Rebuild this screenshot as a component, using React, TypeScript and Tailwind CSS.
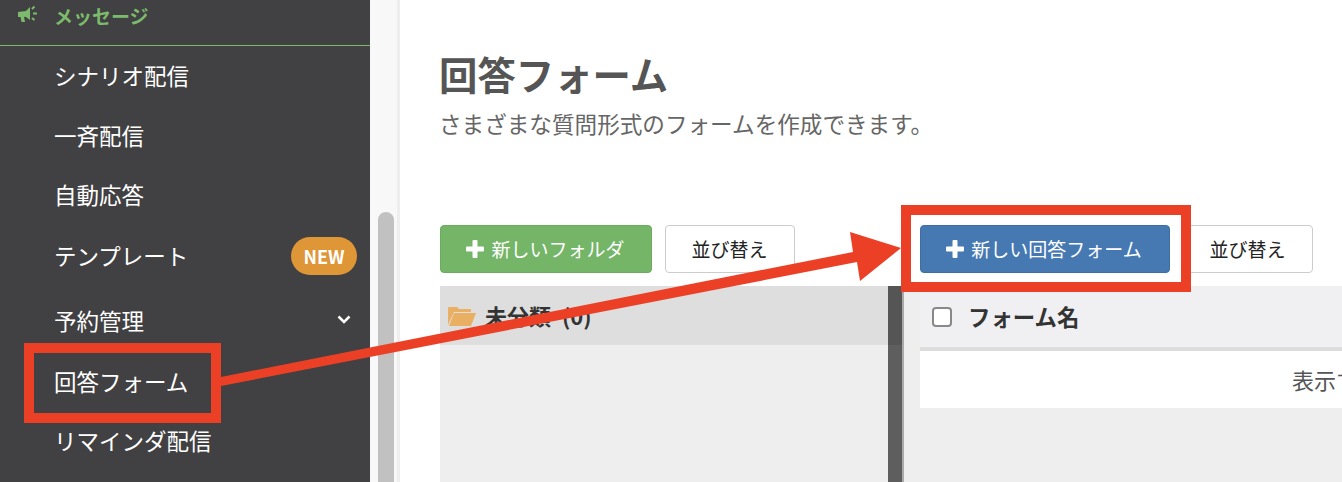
import React from 'react';

const sideItems = [
  { label: 'シナリオ配信', h: 'h-[59px]' },
  { label: '一斉配信', h: 'h-[61px]' },
  { label: '自動応答', h: 'h-[57px]' },
];

const Plus = () => (
  <svg width="18" height="18" viewBox="0 0 18 18" className="shrink-0">
    <path d="M6.5 1q0-1 1-1h3q1 0 1 1v5.5H17q1 0 1 1v3q0 1-1 1h-5.5V17q0 1-1 1h-3q-1 0-1-1v-5.5H1q-1 0-1-1v-3q0-1 1-1h5.5z" fill="#fff" />
  </svg>
);

const SortButton = () => (
  <button className="w-[130px] h-12 pr-[1px] bg-white border border-[#ccc] rounded text-[19px] text-[#222]">
    並び替え
  </button>
);

// 注釈の赤枠と矢印
const Annotations = () => (
  <>
    <div className="absolute left-[24px] top-[343px] w-[197px] h-[80px] border-[10px] border-[#ec4026]" />
    <div className="absolute left-[901px] top-[205px] w-[290px] h-[87px] border-[10px] border-[#ec4026]" />
    <svg className="absolute left-0 top-0" width="1342" height="482">
      <polygon
        points="221,377 853,252 850,232 901,248 860,281 857,262 221,386"
        fill="#ec4026"
      />
    </svg>
  </>
);

export default function App() {
  return (
    <div
      className="relative flex w-[1342px] h-[482px] overflow-hidden bg-white"
      style={{ fontFamily: '"Noto Sans CJK JP", "Noto Sans", sans-serif' }}
    >
      {/* サイドバー */}
      <aside className="w-[370px] shrink-0 bg-[#414042] text-white">
        <div className="flex items-center h-[46px] pb-[15px] border-b border-[#7cbb6b] text-[#7cbb6b]">
          <svg width="20" height="17" viewBox="0 0 20 17" className="ml-[18px] mt-[-1px]">
            <path d="M0 6l8-1 4-4v13l-4-3-2-.3L7 16H3.500L2.500 11H0z" fill="#7cbb6b" />
            <path d="M14 3l2.500-2.500M15 7.500h4M14 12l2.500 2" stroke="#7cbb6b" strokeWidth="2" />
          </svg>
          <span className="ml-[16px] text-[19px] font-bold leading-none">メッセージ</span>
        </div>
        <ul className="text-[22.5px]">
          {sideItems.map((item) => (
            <li key={item.label} className={`flex items-center pl-[54px] ${item.h}`}>
              {item.label}
            </li>
          ))}
          <li className="flex items-center justify-between pl-[54px] pr-[13px] h-[66px]">
            テンプレート
            <span className="flex items-center justify-center w-[66px] h-[38px] rounded-full bg-[#df9636] text-[18px] font-bold">
              NEW
            </span>
          </li>
          <li className="flex items-center justify-between pl-[54px] pr-[19px] h-[64px]">
            予約管理
            <svg width="14" height="9" viewBox="0 0 14 9" className="mt-[-3px]">
              <path d="M1.500 1.500L7 7l5.500-5.500" fill="none" stroke="#fff" strokeWidth="2.500" />
            </svg>
          </li>
          <li className="flex items-center pl-[54px] h-[58px]">回答フォーム</li>
          <li className="flex items-center pl-[54px] h-[60px]">リマインダ配信</li>
        </ul>
      </aside>

      {/* スクロールバー */}
      <div className="relative w-[30px] shrink-0 bg-[#f8f8f8] border-r-[3px] border-[#eeeeee]">
        <div className="absolute left-[8px] top-[212px] w-4 h-[400px] rounded-full bg-[#c1c1c1]" />
      </div>

      {/* メイン */}
      <main className="flex-1 min-w-0 pl-[40px] pt-[47px]">
        <h1 className="text-[38.4px] ml-[-1px] font-bold leading-[52px] text-[#555]">回答フォーム</h1>
        <p className="mt-[9px] ml-[-1px] text-[22.6px] leading-[32px] text-[#666] whitespace-nowrap">
          さまざまな質問形式のフォームを作成できます。
        </p>

        <div className="flex h-[257px] mt-[85px]">
          {/* フォルダ列 */}
          <div className="w-[448px] shrink-0">
            <div className="flex gap-[13px]">
              <button className="flex items-center justify-center gap-[7px] w-[212px] h-12 pr-[1px] rounded bg-[#75b568] border border-[#6dab60] text-white text-[19px]">
                <Plus />
                新しいフォルダ
              </button>
              <SortButton />
            </div>
            <div className="mt-[13px] h-full bg-[#eeeeee]">
              <div className="flex items-center h-[59px] bg-[#dedede] pl-[8px] gap-[9px] text-[22px] font-bold text-[#333] [word-spacing:6px]">
                <svg width="28" height="22" viewBox="0 0 28 22">
                  <path d="M0 20V3q0-1 1-1h8l2 2h11q1 0 1 1v2H6z" fill="#e9b064" />
                  <path d="M6 8h22l-5 13H1z" fill="#e9b064" />
                </svg>
                未分類 (0)
              </div>
            </div>
          </div>

          {/* 仕切り */}
          <div className="w-[16px] shrink-0 mt-[61px] h-full bg-[#5e5e5e] border-r-2 border-[#aaa]">
            <div className="h-[59px] bg-[#555]" />
          </div>

          {/* フォーム列 */}
          <div className="flex-1 min-w-0">
            <div className="flex gap-[13px] pl-[16px]">
              <button className="flex items-center justify-center gap-[7px] w-[250px] h-12 pr-[2px] rounded bg-[#4679b2] border border-[#3f6ea3] text-white text-[19px]">
                <Plus />
                新しい回答フォーム
              </button>
              <SortButton />
            </div>
            <div className="mt-[13px] h-full bg-[#eeeeee] pl-[16px]">
              <div className="flex items-center h-[61px] bg-[#f0f0f2] pl-[12px] gap-[16px] text-[22.4px] font-bold text-[#333]">
                <span className="w-5 h-5 bg-white border-2 border-[#888] rounded-[4px]" />
                フォーム名
              </div>
              <div className="h-1 bg-[#dddddd]" />
              <div className="flex items-center h-[57px] bg-white pl-[372px] text-[22px] text-[#555] whitespace-nowrap">
                表示するフォームがありません
              </div>
            </div>
          </div>
        </div>
      </main>

      <Annotations />
    </div>
  );
}
